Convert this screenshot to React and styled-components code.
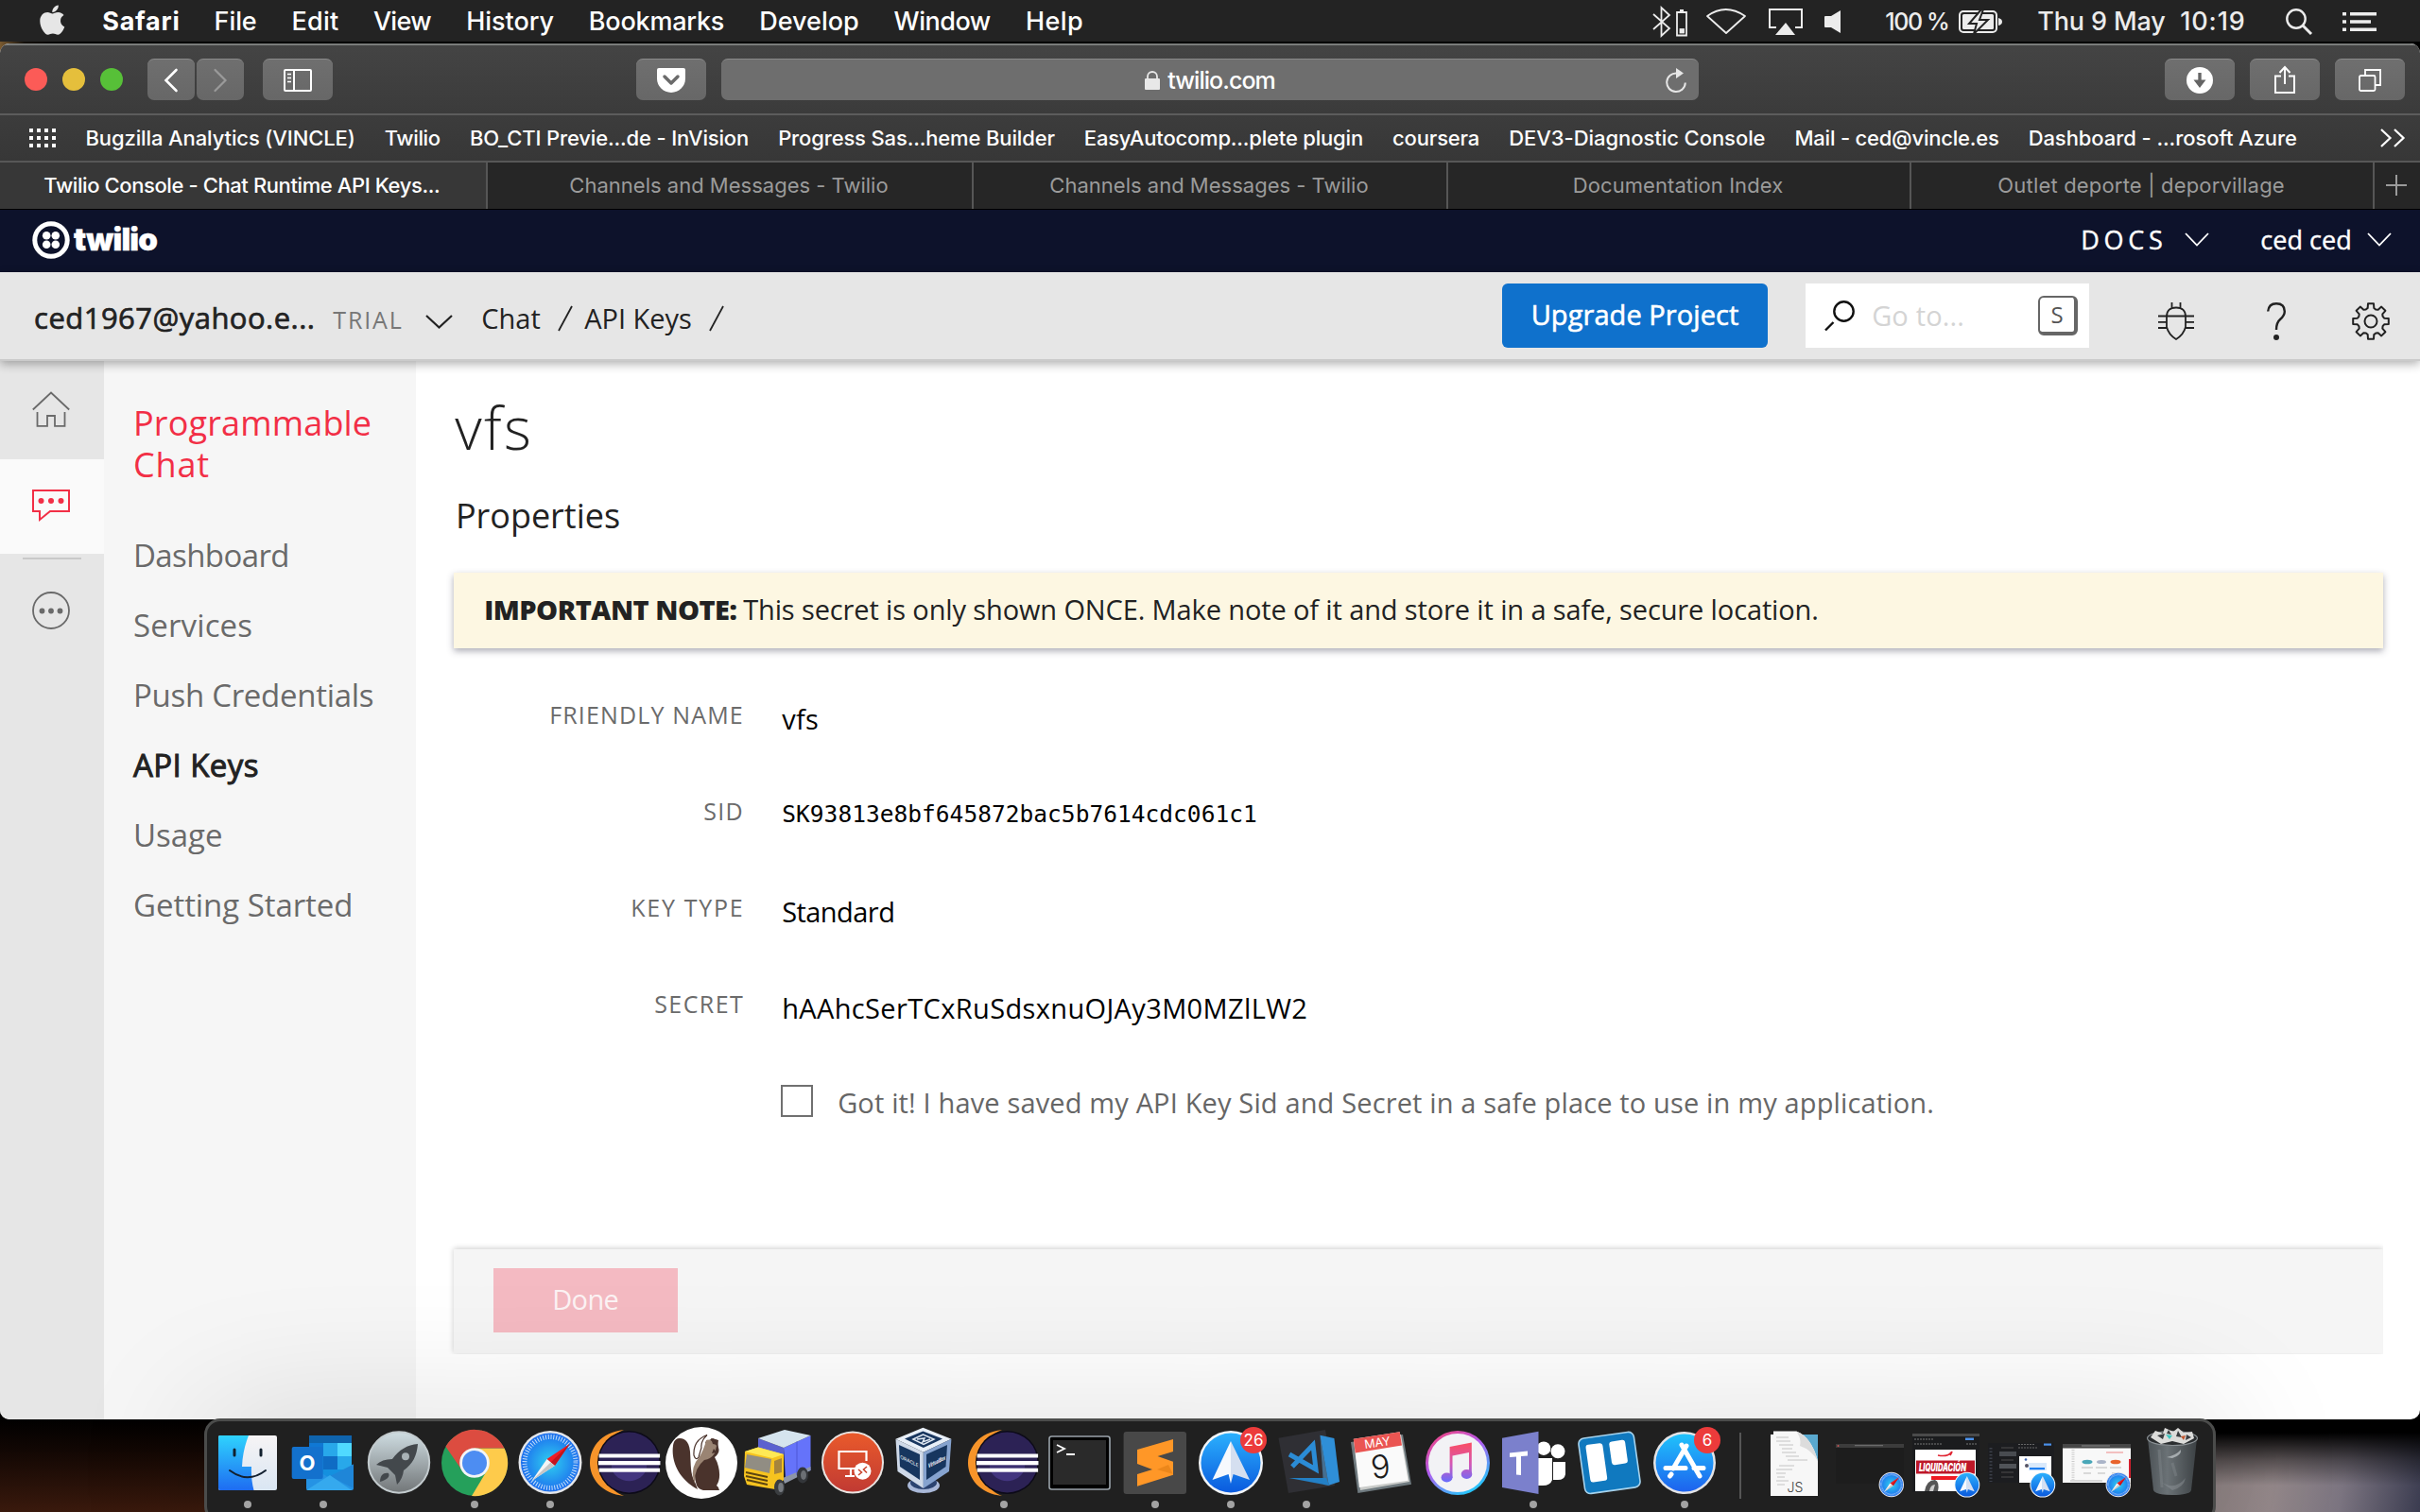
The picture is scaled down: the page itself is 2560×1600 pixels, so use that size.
import React, { useLayoutEffect, useRef } from 'react';
import styled, { createGlobalStyle } from 'styled-components';
import { FaApple } from 'react-icons/fa';

const GlobalStyle = createGlobalStyle`
  * { box-sizing: border-box; }
  html, body { margin: 0; padding: 0; background: #000; }
  body { width: 2560px; height: 1600px; overflow: hidden; }
  svg { display: block; overflow: visible; flex: none; }
  h1, h2, p, ul, dl, dd, dt { margin: 0; padding: 0; font-weight: inherit; }
`;

const system = `Inter, Roboto, sans-serif`;
const whitney = `"Open Sans", "Noto Sans", sans-serif`;

/* ---------- text whose tracking is worked out from its optical width ---------- */
const Tracked = styled.span`
  display: inline-block;
  white-space: pre;
  flex: none;
`;

function Fit({ w, children, ...rest }) {
  const ref = useRef(null);
  useLayoutEffect(() => {
    const el = ref.current;
    el.style.letterSpacing = '0px';
    el.style.margin = '0';
    const size = parseFloat(getComputedStyle(el).fontSize);
    const pad = size * 0.03;
    const natural = el.getBoundingClientRect().width;
    const count = Math.max(1, el.textContent.length - 1);
    const spacing = (w + pad * 2 - natural) / count;
    el.style.letterSpacing = `${spacing}px`;
    el.style.marginLeft = `${-pad}px`;
    el.style.marginRight = `${-pad - spacing}px`;
  }, [w, children]);
  return <Tracked ref={ref} {...rest}>{children}</Tracked>;
}

/* ---------- desktop ---------- */
const Desktop = styled.div`
  width: 2560px;
  height: 1600px;
  display: flex;
  flex-direction: column;
  overflow: hidden;
  background:
    linear-gradient(to bottom, #000 0, rgba(20, 8, 4, 0.9) 35%, rgba(64, 28, 14, 0.9) 100%) 0 1500px / 230px 100px no-repeat,
    linear-gradient(to bottom, #000 0, #000 16%, rgba(0, 0, 0, 0.4) 46%, rgba(0, 0, 0, 0) 72%) 2330px 1500px / 230px 100px no-repeat,
    linear-gradient(100deg, #857a7a 0, #94888a 35%, #7b7480 65%, #3b3c50 100%) 2330px 1500px / 230px 100px no-repeat,
    linear-gradient(to right, #7a5a30 0, #14100c 1%, #000 3%) 0 44px / 2560px 20px no-repeat,
    #000;
`;

/* ---------- menu bar ---------- */
const MenuBar = styled.header`
  height: 44px;
  flex: none;
  display: flex;
  align-items: center;
  background: #232323;
  color: #fff;
  font: 450 27px/44px ${system};
  padding: 1px 46px 0 42px;
`;
const AppleLogo = styled(FaApple)`
  width: 26px;
  height: 32px;
  margin-bottom: 4px;
  color: #e6e6e6;
`;
const Menus = styled.nav`
  display: flex;
  gap: 38.4px;
  margin-left: 41px;
`;
const AppName = styled.span`
  font-weight: 700;
  display: flex;
`;
const Status = styled.div`
  display: flex;
  align-items: center;
  margin-left: auto;
  color: #ececec;
`;
const StatusItem = styled.div`
  display: flex;
  margin-left: ${(p) => p.$gap}px;
  font-size: ${(p) => p.$size || 27}px;
`;

/* ---------- browser window ---------- */
const Window = styled.main`
  height: 1456px;
  margin-top: 2px;
  flex: none;
  display: flex;
  flex-direction: column;
  overflow: hidden;
  border-radius: 10px;
  background: #fff;
`;
const Toolbar = styled.div`
  height: 76px;
  flex: none;
  display: flex;
  align-items: center;
  padding: 0 16px 0 26px;
  background: linear-gradient(#444, #3b3b3b);
  border-top: 2px solid #7a7c7b;
  border-bottom: 2px solid #5c5c5c;
`;
const Lights = styled.div`
  display: flex;
  gap: 16px;
`;
const Light = styled.span`
  width: 24px;
  height: 24px;
  border-radius: 50%;
  background: ${(p) => p.$color};
`;
const ToolButton = styled.div`
  width: ${(p) => p.$w || 74}px;
  height: 44px;
  margin-left: ${(p) => p.$gap || 0}px;
  flex: none;
  display: flex;
  align-items: center;
  justify-content: center;
  border-radius: 7px;
  background: linear-gradient(#6f6f6f, #676767);
  border-top: 1px solid #8a8a8a;
`;
const AddressBar = styled.div`
  width: 1034px;
  height: 44px;
  margin-left: 16px;
  flex: none;
  display: grid;
  grid-template-columns: 1fr auto 1fr;
  align-items: center;
  border-radius: 7px;
  background: #6e6e6e;
  border-top: 1px solid #8a8a8a;
  color: #fff;
  font: 450 25px/42px ${system};
`;
const Domain = styled.div`
  grid-column: 2;
  display: flex;
  align-items: center;
  gap: 9px;
`;
const Reload = styled.div`
  justify-self: end;
  margin-right: 13px;
`;
const Bookmarks = styled.div`
  height: 50px;
  flex: none;
  display: flex;
  align-items: center;
  gap: 32.2px;
  padding: 0 16px 0 31px;
  background: linear-gradient(#3c3c3c, #373737);
  border-bottom: 2px solid #575757;
  color: #fff;
  font: 450 22px/48px ${system};
`;
const More = styled.div`
  margin-left: auto;
`;
const Tabs = styled.div`
  height: 50px;
  flex: none;
  display: grid;
  grid-template-columns: 514px 514px 502px 490px 490px 50px;
  border-bottom: 1px solid #000;
`;
const Tab = styled.div`
  display: flex;
  justify-content: center;
  align-items: center;
  padding: 0 2px 1px 0;
  background: ${(p) => (p.$active ? '#373737' : '#262626')};
  color: ${(p) => (p.$active ? '#fff' : '#9b9b9b')};
  border-left: ${(p) => (p.$active ? 0 : 2)}px solid #565656;
  font: ${(p) => (p.$active ? 500 : 400)} 22px/48px ${system};
`;

/* ---------- console ---------- */
const Brand = styled.div`
  height: 66px;
  flex: none;
  display: flex;
  align-items: center;
  padding: 0 30px 3px 34px;
  background: #0d122b;
  color: #fff;
  font: 400 27px/60px ${whitney};
  -webkit-text-stroke: 0.4px currentColor;
`;
const Wordmark = styled.span`
  display: flex;
  margin-left: 5px;
  padding-bottom: 1px;
  font: 900 33px/56px Inter, sans-serif;
`;
const BrandMenu = styled.div`
  display: flex;
  align-items: center;
  gap: ${(p) => p.$gap}px;
  margin-left: ${(p) => p.$left};
`;
const ProjectBar = styled.div`
  height: 94px;
  flex: none;
  display: flex;
  align-items: center;
  padding: 0 32px 0 37px;
  background: #e6e6e6;
  border-bottom: 2px solid #cbcbcb;
  box-shadow: 0 3px 10px rgba(0, 0, 0, 0.32);
  z-index: 1;
  color: #222;
  font: 400 29px/60px ${whitney};
`;
const Crumbs = styled.div`
  display: flex;
  align-items: baseline;
  padding-top: 5px;
`;
const Account = styled.span`
  display: flex;
  font-size: 31px;
  -webkit-text-stroke: 0.7px currentColor;
`;
const Trial = styled.span`
  display: flex;
  margin: 0 26px 0 21px;
  font-size: 25px;
  color: #777;
`;
const Crumb = styled.span`
  display: flex;
  margin-left: ${(p) => p.$gap}px;
`;
const Upgrade = styled.div`
  width: 281px;
  height: 68px;
  margin-left: auto;
  padding-bottom: 3px;
  display: flex;
  align-items: center;
  justify-content: center;
  border-radius: 6px;
  background: #0f71cc;
  color: #fff;
  font-size: 29px;
  -webkit-text-stroke: 0.6px currentColor;
`;
const Search = styled.div`
  width: 300px;
  height: 68px;
  margin: 0 73px 0 40px;
  padding: 0 12px 0 20px;
  display: flex;
  align-items: center;
  gap: 19px;
  background: #fff;
  color: #d4d4d4;
`;
const KeyCap = styled.div`
  width: 42px;
  height: 42px;
  margin-left: auto;
  display: flex;
  align-items: center;
  justify-content: center;
  border: 2px solid #666;
  border-width: 2px 4px 4px 2px;
  border-radius: 6px;
  color: #555;
  font: 400 24px/36px ${whitney};
`;
const Tools = styled.div`
  display: flex;
  align-items: center;
  padding-top: 12px;
`;
const Body = styled.div`
  flex: 1;
  display: grid;
  grid-template-columns: 110px 330px 1fr;
`;
const Rail = styled.div`
  background: #e6e6e6;
  display: flex;
  flex-direction: column;
  align-items: center;
`;
const RailItem = styled.div`
  width: 110px;
  height: ${(p) => p.$h}px;
  padding: 0 2px 3px 0;
  display: flex;
  align-items: center;
  justify-content: center;
  background: ${(p) => (p.$active ? '#fafafa' : 'transparent')};
`;
const RailRule = styled.div`
  width: 62px;
  height: 2px;
  margin: 4px 0 1px;
  background: #c9c9c9;
`;
const Side = styled.nav`
  padding: 44px 0 0 32px;
  background: #f6f6f6;
`;
const SideTitle = styled.div`
  height: 88px;
  margin-bottom: 37px;
  display: flex;
  flex-direction: column;
  align-items: flex-start;
  color: #f22f46;
  font: 400 36px/44px ${whitney};
`;
const SideItem = styled.div`
  height: 74px;
  display: flex;
  align-items: center;
  color: ${(p) => (p.$active ? '#222' : '#6a6a6a')};
  font: 400 33px/74px ${whitney};
  -webkit-text-stroke: ${(p) => (p.$active ? 1 : 0)}px currentColor;
`;
const Content = styled.section`
  padding: 41px 39px 0 40px;
  display: flex;
  flex-direction: column;
  color: #222;
  font-family: ${whitney};
`;
const Title = styled.h1`
  height: 60px;
  margin-left: 3px;
  display: flex;
  font: 300 62px/58px ${whitney};
`;
const Subtitle = styled.h2`
  height: 40px;
  margin: 43px 0 40px 3px;
  display: flex;
  font: 400 36px/40px ${whitney};
`;
const Note = styled.div`
  height: 80px;
  flex: none;
  padding: 0 33px 3px;
  display: flex;
  align-items: center;
  gap: 8px;
  background: #fdf7e2;
  box-shadow: 0 3px 7px rgba(60, 60, 80, 0.42);
  font-size: 29px;
`;
const Strong = styled.strong`
  display: flex;
  font-weight: 800;
`;
const Fields = styled.dl`
  margin-top: 50px;
`;
const Field = styled.div`
  height: 102px;
  display: grid;
  grid-template-columns: 305px 1fr;
  column-gap: 43px;
`;
const Label = styled.dt`
  display: flex;
  justify-content: flex-end;
  padding-top: 2px;
  color: #6b6b6b;
  font: 400 25px/36px ${whitney};
`;
const Value = styled.dd`
  display: flex;
  padding-top: ${(p) => (p.$mono ? 6 : 7)}px;
  color: #000;
  font: ${(p) => (p.$mono ? `400 24.500px/36px "DejaVu Sans Mono", monospace` : `400 29px/36px ${whitney}`)};
`;
const Confirm = styled.div`
  height: 178px;
  padding: 4px 0 0 346px;
  display: flex;
  align-items: flex-start;
  gap: 27px;
  color: #666;
  font: 400 29px/38px ${whitney};
`;
const Box = styled.span`
  width: 34px;
  height: 34px;
  border: 2px solid #707070;
  background: #fff;
`;
const Actions = styled.div`
  height: 110px;
  padding: 20px 42px;
  background: #f5f5f5;
  box-shadow: 0 -1px 6px rgba(0, 0, 0, 0.2);
  clip-path: inset(-10px 0 -1px -8px);
`;
const Done = styled.div`
  width: 195px;
  height: 68px;
  display: flex;
  align-items: center;
  justify-content: center;
  background: #f4bac2;
  color: #fcf3f4;
  font: 400 29px/66px ${whitney};
  padding-bottom: 2px;
`;

/* ---------- dock ---------- */
const DockBar = styled.footer`
  width: 2128px;
  height: 110px;
  margin: -1px auto 0;
  padding-left: 3px;
  flex: none;
  display: flex;
  position: relative;
  border: 3px solid #4b4c4b;
  border-radius: 17px;
  background: #202020;
  box-shadow: 0 0 150px rgba(0, 0, 0, 0.15);
`;
const Slot = styled.div`
  width: 80px;
  display: flex;
  flex-direction: column;
  align-items: center;
`;
const Running = styled.span`
  width: 8px;
  height: 8px;
  border-radius: 50%;
  background: #a3a3a3;
`;
const DockRule = styled.span`
  width: 2px;
  height: 70px;
  margin: 12px 16px 0 18px;
  background: #555;
`;

const Chevron = ({ w = 29, h = 15, c = '#222', s = 2.2 }) => (
  <svg width={w} height={h} viewBox={`0 0 ${w} ${h}`} fill="none" stroke={c} strokeWidth={s}>
    <path d={`M1 1L${w / 2} ${h - 1.5}L${w - 1} 1`} />
  </svg>
);

const T = ({ x, y, s, f = '#fff', wt = 400, children, ...r }) => (
  <text x={x} y={y} fontSize={s} fill={f} fontWeight={wt} textAnchor="middle" fontFamily="Inter, sans-serif" {...r}>{children}</text>
);

const Badge = ({ n }) => (
  <g><circle cx="64" cy="20" r="14" fill="#ec3b3b" /><T x={64} y={26} s={17}>{n}</T></g>
);

const Compass = ({ id }) => (
  <g>
    <defs><radialGradient id={id}><stop offset="0" stopColor="#2fd0f0" /><stop offset="1" stopColor="#1d6fee" /></radialGradient></defs>
    <circle cx="40" cy="43.5" r="33.5" fill="#e4e6ea" />
    <circle cx="40" cy="43.5" r="31" fill={`url(#${id})`} />
    <circle cx="40" cy="43.5" r="27" fill="none" stroke="#fff" strokeOpacity=".75" strokeWidth="5" strokeDasharray="1 1.83" />
    <path d="M60.6 24L36.5 40L44.8 47Z" fill="#f01c24" />
    <path d="M60.6 24L40.5 43.5L44.8 47Z" fill="#c4141c" />
    <path d="M20.5 63L36.5 40L44.8 47Z" fill="#f4f4f4" />
    <path d="M20.5 63L40.5 43.5L44.8 47Z" fill="#c5c5c5" />
  </g>
);

const Plane = ({ id }) => (
  <g>
    <defs><linearGradient id={id} x2="0" y2="1"><stop offset="0" stopColor="#2bb0fd" /><stop offset="1" stopColor="#0a5ade" /></linearGradient></defs>
    <circle cx="40" cy="44" r="34" fill="#f2f5f8" />
    <circle cx="40" cy="44" r="31.5" fill={`url(#${id})`} />
    <path d="M40 21L20.5 62L37.6 56L40 66Z" fill="#f6f9fd" />
    <path d="M40 21L60 62L42.6 56L40 66Z" fill="#d5dff0" />
  </g>
);

const Eclipse = () => (
  <g>
    <path d="M38 9C-10 14 -10 74 38 79C8 68 8 20 38 9Z" fill="#f7942a" />
    <circle cx="43.5" cy="43.5" r="33.5" fill="#0c0a18" />
    <circle cx="43.5" cy="43.5" r="32" fill="#2c2255" />
    <path d="M25 50A19 17 0 0 0 62 50Z" fill="#43357f" />
    <path d="M25 45H62V50H25Z" fill="#3b2f70" />
    <g fill="#fff"><rect x="11.6" y="34.5" width="64.5" height="4" /><rect x="11" y="42" width="65.5" height="4.3" /><rect x="11.6" y="49.7" width="64.5" height="4" /></g>
  </g>
);

const icons = {
  finder: (
    <g>
      <defs>
        <linearGradient id="fa" x2="0" y2="1"><stop offset="0" stopColor="#2fd3fd" /><stop offset="1" stopColor="#1e6cf2" /></linearGradient>
        <linearGradient id="fb" x2="0" y2="1"><stop offset="0" stopColor="#f6f4f5" /><stop offset="1" stopColor="#d9e6f3" /></linearGradient>
      </defs>
      <rect x="9" y="15" width="62" height="58" rx="2" fill="url(#fb)" />
      <path d="M11 15H41C37 25 34.5 36 34 48H44C43.6 57 44.5 65 46.5 73H11Q9 73 9 71V17Q9 15 11 15Z" fill="url(#fa)" />
      <path d="M26 30V36M54 30V36" stroke="#12202f" strokeWidth="3" strokeLinecap="round" />
      <path d="M21 52Q40 66.5 59 52" fill="none" stroke="#12202f" strokeWidth="2" strokeLinecap="round" />
    </g>
  ),
  outlook: (
    <g>
      <rect x="25" y="15" width="45" height="50" rx="1.5" fill="#1490df" />
      <rect x="25" y="15" width="45" height="8" fill="#0f64ad" />
      <rect x="40" y="23" width="15" height="14" fill="#28a8ea" /><rect x="55" y="23" width="15" height="14" fill="#50d9ff" />
      <rect x="25" y="23" width="15" height="14" fill="#0f78d4" /><rect x="40" y="37" width="15" height="14" fill="#0f6cc4" />
      <rect x="55" y="37" width="15" height="14" fill="#28a8ea" />
      <path d="M22 46L47 60L72 45.5V71Q72 73 70 73H24Q22 73 22 71Z" fill="#2593e4" />
      <path d="M47 58L72 45.5V71Z" fill="#1f86d8" /><path d="M22 73L47 57L70 73Z" fill="#35a9ee" />
      <rect x="6.7" y="27" width="33" height="34" rx="2" fill="#1371cd" />
      <T x={23} y={52} s={22} wt={700}>O</T>
    </g>
  ),
  launchpad: (
    <g>
      <defs><linearGradient id="lp" x2="0" y2="1"><stop offset="0" stopColor="#cfdde2" /><stop offset="1" stopColor="#727678" /></linearGradient></defs>
      <circle cx="40" cy="43.5" r="32.2" fill="url(#lp)" stroke="#c3cbce" strokeWidth="2" />
      <path d="M60 24C49 25 40 30 33 40Q22 40 16 46L28 49L36 57L38 67Q44 61 45 52C55 45 59 36 60 24Z" fill="#43484c" />
      <circle cx="47" cy="37.3" r="4" fill="#a9b2b6" />
      <path d="M20 64C20 57 24 54 29 55C31 59 27 62 20 64Z" fill="#43484c" />
    </g>
  ),
  chrome: (
    <g>
      <circle cx="40" cy="44" r="35" fill="#25a05b" />
      <path d="M71.5 28.5A35 35 0 0 1 37 79L53.4 51.7L40 28.5Z" fill="#fecb4b" />
      <path d="M9.5 26.8A35 35 0 0 1 71.5 28.5H40L26.6 51.7Z" fill="#dc4c40" />
      <circle cx="40" cy="44" r="15.8" fill="#f3f5f6" /><circle cx="40" cy="44" r="13" fill="#4d8df2" />
    </g>
  ),
  safari: <Compass id="c1" />,
  eclipse: <Eclipse />,
  dbeaver: (
    <g>
      <circle cx="40" cy="44" r="38" fill="#fff" />
      <path d="M10 26C8 40 14 60 36 72L33 64C28 56 29 46 28 32C27 22 23 18 17 18C12 18 10.5 22 10 26Z" fill="#4a332c" />
      <path d="M48 32Q46 38 37 44Q30 54 35 68Q37 72 42 73H59Q58 69 56 68Q61 60 58 48Q57 43 54 38Q60 33 58 28L57 20L52 18L44 22Z" fill="#4a332c" />
      <path d="M44 24Q40 36 34 43Q28 54 33 66Q32 50 43 41Q50 40 54 34L56 26Q50 18 45 20Z" fill="#9a8473" />
      <path d="M32 36Q31 20 46 14.500Q39 21 40 28L37 38Q34 42 32 36Z" fill="#fff" stroke="#4a332c" strokeWidth="1.2" />
      <path d="M50 18L58 20L57 25L52 24ZM53 29L56 33L51 34Z" fill="#4a332c" />
    </g>
  ),
  truck: (
    <g>
      <path d="M20 18L47 28V62L20 50Z" fill="#5b62cf" /><path d="M47 28L75.5 15V52L49 61Z" fill="#6573fa" />
      <path d="M20 18L48 9L75.5 15L47 28Z" fill="#d5e4ee" /><path d="M46 60L75.5 48V52L48 66Z" fill="#8d96a6" />
      <path d="M61 21.500V57" stroke="#4e59d6" />
      <ellipse cx="67" cy="57" rx="6" ry="8.5" fill="#33363a" /><ellipse cx="68" cy="57" rx="3" ry="5" fill="#6b6f74" />
      <path d="M6 32L20 27.5L47 35V62L38 72L8 67L5 58Z" fill="#f6c31f" /><path d="M6 32L20 27.5L47 35L35 39Z" fill="#ffe955" />
      <path d="M8 35L34 40L32 55L6 49Z" fill="#918d83" /><path d="M37 42L45 39V54L37 56Z" fill="#a5843c" />
      <path d="M7 54L30 59M7 58L30 63M8 62L30 67" stroke="#5b4410" strokeWidth="1.8" />
      <ellipse cx="42.5" cy="70" rx="5.5" ry="8.5" fill="#3a3d40" /><ellipse cx="44" cy="70" rx="2.8" ry="5" fill="#777b80" />
    </g>
  ),
  remote: (
    <g>
      <defs><linearGradient id="rd" x2="0" y2="1"><stop offset="0" stopColor="#e95a2b" /><stop offset="1" stopColor="#c13a33" /></linearGradient></defs>
      <circle cx="40" cy="43.5" r="33" fill="#e9e4e1" /><circle cx="40" cy="43.5" r="31" fill="url(#rd)" />
      <path d="M45 50H25.5V32H54.5V42M38 50V57M32 58H42" fill="none" stroke="#fff" strokeWidth="2.2" />
      <circle cx="50.5" cy="52.7" r="9" fill="#fff" />
      <path d="M46 51L49.5 54L46 57M55 48L51.5 51L55 54.5" fill="none" stroke="#c9452f" strokeWidth="1.6" />
    </g>
  ),
  vbox: (
    <g>
      <ellipse cx="35" cy="68" rx="17" ry="8" fill="#a9b8d8" /><ellipse cx="35" cy="65" rx="14" ry="7" fill="#2b4370" />
      <path d="M5.5 18.7L34.4 6.7L64.4 18.7L34.8 32.7Z" fill="#e8eff8" /><path d="M5.5 18.7L34.8 32.7V71L7.5 53Z" fill="#cfd9e8" />
      <path d="M64.4 18.7L34.8 32.7V71L62 53Z" fill="#86a3cf" />
      <path d="M15 18.6L34.4 10.5L55 18.6L34.8 28Z" fill="#18365f" /><path d="M9 25L31 35V62L10 48Z" fill="#17365f" /><path d="M60 25L38 35V62L58.5 48Z" fill="#17365f" />
      <path d="M24 19L34.5 14L46 19L35 24.5ZM28 19L36 18L34 22L42 19" fill="none" stroke="#dfe8f3" strokeWidth="1.5" />
      <T x={0} y={0} s={5} transform="translate(20 44) skewY(26)">ORACLE</T>
      <T x={0} y={0} s={6.5} wt={700} transform="translate(49 45) skewY(-26)" textLength="18" lengthAdjust="spacingAndGlyphs">VirtualBox</T>
    </g>
  ),
  terminal: (
    <g>
      <rect x="8" y="16" width="64" height="56" rx="2.5" fill="#010101" stroke="#9aa3aa" strokeWidth="1.6" />
      <rect x="12" y="20" width="56" height="47" fill="#2a2a2a" />
      <path d="M16 25L24 29L16 33M26 35H35" fill="none" stroke="#fff" strokeWidth="1.8" />
    </g>
  ),
  sublime: (
    <g>
      <rect x="6.6" y="11" width="66.4" height="66" rx="3" fill="#484848" />
      <path d="M21 30L59 19V32L42.6 37L59 42.7V56.7L21 68.7V56L37 51L21 45Z" fill="#ff9727" /><path d="M42 51L59 56L54 46Z" fill="#e07d14" opacity=".6" />
    </g>
  ),
  spark: <g><Plane id="p1" /><Badge n="26" /></g>,
  vscode: (
    <g>
      <path d="M10.5 17.7L60 9L70 68L21 76Z" fill="#2f2f34" />
      <path d="M54.4 14.7L69.4 18L75 64L63.7 67.7Z" fill="#2f8fd8" /><path d="M54.4 14.7L58 67L63.7 67.7Z" fill="#5bb0ee" opacity=".5" />
      <path d="M21.6 60L61 60L64 68Z" fill="#2380c6" />
      <path d="M25 48L47 25L50 51L22 35" fill="none" stroke="#2b8cd6" strokeWidth="5" />
    </g>
  ),
  calendar: (
    <g>
      <path d="M7 22L62 14L71 66.7L14.4 76Z" fill="#6f7a7f" /><path d="M11 24L60 14L69 64L17 73Z" fill="#c9cbc9" />
      <path d="M9.8 18.7L58.7 11.3L67.6 62.7L15.9 70Z" fill="#fafafa" /><path d="M9.8 18.7L58.7 11.3L61 25.5L11.7 33.5Z" fill="#ea5552" />
      <T x={0} y={0} s={12.5} transform="translate(35.5 27) rotate(-8)">MAY</T>
      <T x={0} y={0} s={34} wt={300} f="#1c1c1c" transform="translate(40 60) rotate(-7)">9</T>
    </g>
  ),
  itunes: (
    <g>
      <defs>
        <linearGradient id="it" x2=".6" y2="1"><stop offset="0" stopColor="#fb3f6a" /><stop offset=".5" stopColor="#b35cf0" /><stop offset="1" stopColor="#28c4fb" /></linearGradient>
        <linearGradient id="in" gradientUnits="userSpaceOnUse" x1="40" y1="22" x2="40" y2="64"><stop offset="0" stopColor="#fb4d60" /><stop offset=".55" stopColor="#d457b5" /><stop offset="1" stopColor="#6a6cfb" /></linearGradient>
      </defs>
      <circle cx="40" cy="44" r="34" fill="url(#it)" /><circle cx="40" cy="44" r="31" fill="#f2f2f5" />
      <g fill="url(#in)"><path d="M31.6 27L54.8 22.500V56H52V33L34.5 36.500V60H31.6Z" /><ellipse cx="28.5" cy="59.500" rx="6" ry="5" /><ellipse cx="49.5" cy="56" rx="5.8" ry="5" /></g>
    </g>
  ),
  teams: (
    <g>
      <g fill="#fff"><circle cx="51" cy="28.7" r="7.3" /><circle cx="66" cy="31.7" r="7.5" /><path d="M45 39H60V62Q58 68 50 68H45Z" /><path d="M61 43H74V56Q73 62 66 62H61Z" /></g>
      <path d="M7 17.7L45.5 10.7V77L7 70Z" fill="#7b80cc" />
      <path d="M15 33.5L34 31.5V36.5L27 37V57L22 56.5V37.6L15 38Z" fill="#fff" />
    </g>
  ),
  trello: (
    <g transform="rotate(-8 40 44)">
      <rect x="11" y="14.5" width="59" height="59" rx="6" fill="#1079bf" stroke="#a6d2ec" strokeWidth="1.6" />
      <rect x="18" y="22" width="18" height="40" rx="3" fill="#fff" /><rect x="43" y="22" width="17" height="25" rx="3" fill="#fff" />
    </g>
  ),
  appstore: (
    <g>
      <defs><linearGradient id="as" x2="0" y2="1"><stop offset="0" stopColor="#20c3fb" /><stop offset="1" stopColor="#1d62ee" /></linearGradient></defs>
      <circle cx="40" cy="44" r="33" fill="#e4e4e6" /><circle cx="40" cy="44" r="30.5" fill="url(#as)" />
      <path d="M42 26L28 50M26 56L24.5 58M37 25L56 58M20 49.5H41M50 49.5H60" stroke="#fff" strokeWidth="5" strokeLinecap="round" fill="none" />
      <Badge n="6" />
    </g>
  ),
  doc: (
    <g>
      <path d="M15 14H65V60H15Z" fill="#5aa9cf" /><path d="M18 10.500H42Q58 16 65 42V79H15V14H18Z" fill="#f7f7f7" />
      <path d="M42 10.5Q48 18 46 26Q58 30 65 42Q58 16 42 10.5Z" fill="#dcdcdc" />
      <path d="M21 17H34M21 21H36M24 25H39M27 29H38M27 33H42M31 37H45M33 41H54M24 47H40M21 51H38M21 55H31M22 59H30M21 63H34M22 67H30" stroke="#c4c4c4" strokeWidth="1" />
      <T x={41} y={75} s={14} wt={300} f="#444">JS</T>
    </g>
  ),
  win1: (
    <g>
      <rect x="4" y="24" width="72" height="42" fill="#1d1d1d" /><rect x="4" y="24" width="72" height="4" fill="#3c3c3c" />
      <path d="M24 25.7H54" stroke="#777" /><circle cx="6.5" cy="26" r="1" fill="#c55" />
      <g transform="translate(47 49.8) scale(.395)"><Compass id="c2" /></g>
    </g>
  ),
  win2: (
    <g>
      <rect x="5" y="13" width="71" height="62" fill="#1b1c1e" /><rect x="5" y="13" width="71" height="3" fill="#4a4a4a" />
      <rect x="61" y="17.5" width="9" height="2.5" fill="#4b90e8" /><path d="M7 19H28M7 24H36M62 24H74" stroke="#777" strokeDasharray="2 1" />
      <rect x="8" y="30" width="64" height="44" fill="#fff" />
      <path d="M32 36Q42 38 46 33Q48 31 45 36" fill="none" stroke="#e02432" strokeWidth="1.6" />
      <rect x="9" y="41.500" width="62" height="14" fill="#bd1728" />
      <T x={37} y={53} s={12} wt={900} fontStyle="italic" textLength="50" lengthAdjust="spacingAndGlyphs">LIQUIDACIÓN</T>
      <rect x="25" y="58" width="30" height="4" fill="#ee1c25" /><path d="M18 74Q20 62 29 62Q34 64 32 74Z" fill="#555" /><path d="M23 74Q24 67 29 67L27 74Z" fill="#ccc" />
      <g transform="translate(47 49.8) scale(.395)"><Plane id="p2" /></g>
    </g>
  ),
  win3: (
    <g>
      <rect x="5" y="23" width="70" height="42" fill="#1c1d20" />
      <path d="M8 28V64" stroke="#3a3f48" strokeWidth="3" strokeDasharray="1.500 2" />
      <rect x="17" y="32" width="18" height="5" fill="#484b50" /><rect x="17" y="45" width="18" height="5" fill="#505358" />
      <path d="M19 28H32M19 41H32M19 54H32M19 59H32" stroke="#4c4c4c" strokeWidth="1" />
      <rect x="64" y="23.5" width="8" height="2.2" fill="#4b90e8" /><path d="M37 24.5H54M37 28H58" stroke="#666" strokeDasharray="2 1" />
      <rect x="38" y="37" width="34" height="28" fill="#fff" /><rect x="48" y="44" width="19" height="8" fill="#d9e9fb" /><rect x="49" y="49" width="16" height="2.2" fill="#1f7ff0" />
      <circle cx="45" cy="40.500" r="1.3" fill="#4267b2" /><circle cx="46" cy="47" r="2" fill="#556" />
      <g transform="translate(47 49.8) scale(.395)"><Plane id="p3" /></g>
    </g>
  ),
  win4: (
    <g>
      <rect x="4" y="24" width="72" height="41" fill="#f8f8f8" /><rect x="4" y="24" width="72" height="4.5" fill="#474747" />
      <path d="M24 26H54" stroke="#888" /><path d="M15 30V62" stroke="#ccc" strokeWidth="3" strokeDasharray="1 1.4" />
      <path d="M24 49H36M39 49H51M54 49H66M26 55H34M41 55H49M56 55H64M12 63H46" stroke="#b9b9b9" strokeWidth="1" />
      <path d="M50 33H68" stroke="#e88" strokeWidth="1" /><rect x="74" y="40" width="2" height="20" fill="#d3202e" />
      <ellipse cx="30" cy="43" rx="5.5" ry="2.3" fill="#4aa7b8" /><ellipse cx="45" cy="43" rx="5" ry="2" fill="#aab4c8" /><ellipse cx="60" cy="43" rx="5.5" ry="2.3" fill="#e8632c" />
      <g transform="translate(47 49.8) scale(.395)"><Compass id="c4" /></g>
    </g>
  ),
  trash: (
    <g>
      <defs><linearGradient id="tr"><stop offset="0" stopColor="#4d5357" /><stop offset=".4" stopColor="#6b7276" /><stop offset="1" stopColor="#3c4144" /></linearGradient></defs>
      <path d="M14 18L20 73Q22 78 40 78Q58 78 60 73L66 18Z" fill="url(#tr)" />
      <ellipse cx="40" cy="18" rx="26.5" ry="7.5" fill="#2b2e30" stroke="#8b9195" strokeWidth="1.2" />
      <path d="M17 17L22 10L30 13L32 7L41 11L46 7L52 12L61 11L63 18L52 24L40 21L28 24Z" fill="#dcdcda" />
      <path d="M24 15L32 13L30 19ZM46 10L50 17L44 16ZM55 14L60 17L54 20ZM36 9L39 14L34 13Z" fill="#3a3d40" />
      <path d="M33 14L40 15L37 19Z" fill="#3fc6c0" /><path d="M49 16L54 15L52 20Z" fill="#c2562d" />
      <path d="M34 38Q44 36 49 30Q50 36 40 39Z" fill="#c5cacd" opacity=".7" /><path d="M28 64Q42 74 54 60Q52 70 40 73Z" fill="#989ea2" opacity=".4" />
      <path d="M26 30L29 70M40 44L44 58" stroke="#9ba1a5" strokeWidth="3" opacity=".25" />
    </g>
  ),
};

const dockApps = [
  ['finder', 1], ['outlook', 1], ['launchpad'], ['chrome', 1], ['safari', 1], ['eclipse'], ['dbeaver'], ['truck'], ['remote'], ['vbox'],
  ['eclipse', 1], ['terminal'], ['sublime', 1], ['spark', 1], ['vscode', 1], ['calendar'], ['itunes'], ['teams', 1], ['trello'], ['appstore', 1],
];
const dockShelf = ['doc', 'win1', 'win2', 'win3', 'win4', 'trash'];

const DockIcon = ({ name, running }) => (
  <Slot>
    <svg width="80" height="84" viewBox="0 0 80 84">{icons[name]}</svg>
    {running ? <Running /> : null}
  </Slot>
);

const menus = [['File', 43.5], ['Edit', 48], ['View', 60], ['History', 91], ['Bookmarks', 142], ['Develop', 104], ['Window', 101], ['Help', 59]];
const bookmarks = [
  ['Bugzilla Analytics (VINCLE)', 284], ['Twilio', 58], ['BO_CTI Previe...de - InVision', 294], ['Progress Sas...heme Builder', 291.5],
  ['EasyAutocomp...plete plugin', 294], ['coursera', 91], ['DEV3-Diagnostic Console', 270], ['Mail - ced@vincle.es', 215], ['Dashboard - ...rosoft Azure', 283],
];
const tabs = [
  ['Twilio Console - Chat Runtime API Keys...', 418], ['Channels and Messages - Twilio', 336], ['Channels and Messages - Twilio', 336],
  ['Documentation Index', 221], ['Outlet deporte | deporvillage', 302],
];
const sections = [['Dashboard', 163.5], ['Services', 124], ['Push Credentials', 252.5], ['API Keys', 130.5], ['Usage', 92.5], ['Getting Started', 230.5]];

const gear = Array.from({ length: 8 }, (_, i) => {
  const p = (r, d) => {
    const a = ((i * 45 + d - 90) * Math.PI) / 180;
    return `${(20 + r * Math.cos(a)).toFixed(1)} ${(20 + r * Math.sin(a)).toFixed(1)}`;
  };
  return `${i ? 'L' : 'M'}${p(14.5, -13)}L${p(19, -9)}L${p(19, 9)}L${p(14.5, 13)}L${p(13.6, 22)}`;
}).join('') + 'Z';

export default function App() {
  return (
    <Desktop>
      <GlobalStyle />
      <MenuBar>
        <AppleLogo viewBox="0 24 376 460" preserveAspectRatio="none" />
        <Menus>
          <AppName><Fit w={80}>Safari</Fit></AppName>
          {menus.map(([m, w]) => <Fit key={m} w={w}>{m}</Fit>)}
        </Menus>
        <Status>
          <StatusItem $gap={0}>
            <svg width="37" height="32" viewBox="0 0 37 32" fill="none" stroke="#ececec" strokeWidth="1.8">
              <path d="M1 8L18 23L9.5 31V1L18 9L1 24" /><path d="M26 6H36V30.5H26ZM29 4H33" /><rect x="29.5" y="24" width="3.5" height="3.5" fill="#ececec" />
            </svg>
          </StatusItem>
          <StatusItem $gap={20}>
            <svg width="42" height="27" viewBox="0 0 42 27" fill="none" stroke="#ececec" strokeWidth="1.8"><path d="M1 8Q20.500 -6 41 8L21 26Z" strokeLinejoin="round" /></svg>
          </StatusItem>
          <StatusItem $gap={24}>
            <svg width="36" height="28" viewBox="0 0 36 28" fill="none" stroke="#ececec" strokeWidth="2"><path d="M8 20H1V1H35V20H28" /><path d="M18 15L28 28H7Z" fill="#ececec" stroke="none" /></svg>
          </StatusItem>
          <StatusItem $gap={23}>
            <svg width="18" height="24" viewBox="0 0 18 24" fill="#ececec"><path d="M0 7Q0 6 1 6H7L17 0V24L7 18H1Q0 18 0 17Z" /></svg>
          </StatusItem>
          <StatusItem $gap={47} $size={25}><Fit w={67}>100 %</Fit></StatusItem>
          <StatusItem $gap={10}>
            <svg width="46" height="24" viewBox="0 0 46 24">
              <rect x="1" y="1" width="39" height="22" rx="4" fill="none" stroke="#ececec" strokeWidth="2" /><rect x="4" y="4" width="33" height="16" rx="1.500" fill="#ececec" />
              <path d="M42 8Q46 9 46 12Q46 15 42 16Z" fill="#ececec" /><path d="M24 -1L11 14H19L16 25L31 10H22L26 -1Z" fill="#ececec" stroke="#232323" strokeWidth="2" />
            </svg>
          </StatusItem>
          <StatusItem $gap={38}><Fit w={134}>Thu 9 May</Fit></StatusItem>
          <StatusItem $gap={17}><Fit w={67}>10:19</Fit></StatusItem>
          <StatusItem $gap={44}>
            <svg width="28" height="28" viewBox="0 0 28 28" fill="none" stroke="#ececec" strokeWidth="2.400"><circle cx="11" cy="11" r="9.700" /><path d="M18 18L27 27" strokeWidth="3" /></svg>
          </StatusItem>
          <StatusItem $gap={32}>
            <svg width="36" height="20" viewBox="0 0 36 20" fill="#ececec"><path d="M0 0H4V3.500H0ZM8 0H36V3.500H8ZM0 8.200H4V11.700H0ZM8 8.200H30V11.700H8ZM0 16.500H4V20H0ZM8 16.500H36V20H8Z" /></svg>
          </StatusItem>
        </Status>
      </MenuBar>

      <Window>
        <Toolbar>
          <Lights><Light $color="#fc5b57" /><Light $color="#e5bf3c" /><Light $color="#57c038" /></Lights>
          <ToolButton $w={50} $gap={26}><svg width="14" height="24" viewBox="0 0 14 24" fill="none" stroke="#fff" strokeWidth="2.600" strokeLinecap="round"><path d="M12.500 1L1.500 12L12.500 23" /></svg></ToolButton>
          <ToolButton $w={50} $gap={2}><svg width="14" height="24" viewBox="0 0 14 24" fill="none" stroke="#9a9a9a" strokeWidth="2.200" strokeLinecap="round"><path d="M1.500 1L12.500 12L1.500 23" /></svg></ToolButton>
          <ToolButton $gap={20}>
            <svg width="30" height="24" viewBox="0 0 30 24" fill="none" stroke="#fff" strokeWidth="2"><rect x="1" y="1" width="28" height="22" rx="1" /><path d="M11 1V23" /><path d="M4 5.500H8M4 9.500H8M4 13.500H8" strokeWidth="1.600" /></svg>
          </ToolButton>
          <ToolButton $gap={321}>
            <svg width="30" height="26" viewBox="0 0 30 26"><path d="M2 0H28Q30 0 30 2V11A15 15 0 0 1 0 11V2Q0 0 2 0Z" fill="#fff" /><path d="M8 9L15 16L22 9" fill="none" stroke="#6b6b6b" strokeWidth="3.500" strokeLinecap="round" strokeLinejoin="round" /></svg>
          </ToolButton>
          <AddressBar>
            <Domain>
              <svg width="16" height="20" viewBox="0 0 16 20"><rect y="8" width="16" height="12" rx="1" fill="#e8e8e8" /><path d="M3 9V6A5 5 0 0 1 13 6V9" fill="none" stroke="#e8e8e8" strokeWidth="1.800" /></svg>
              <Fit w={113}>twilio.com</Fit>
            </Domain>
            <Reload>
              <svg width="22" height="26" viewBox="0 0 22 26" fill="none" stroke="#e6e6e6" strokeWidth="2"><path d="M12 5.500A9.800 9.800 0 1 0 20.800 15.500" /><path d="M11 0L19 5.500L11 11Z" fill="#e6e6e6" stroke="none" /></svg>
            </Reload>
          </AddressBar>
          <ToolButton $gap={493}>
            <svg width="28" height="28" viewBox="0 0 28 28"><circle cx="14" cy="14" r="14" fill="#fff" /><path d="M12.300 6H15.700V13.500H20.500L14 22L7.500 13.500H12.300Z" fill="#656565" /></svg>
          </ToolButton>
          <ToolButton $gap={16}>
            <svg width="22" height="30" viewBox="0 0 22 30" fill="none" stroke="#fff" strokeWidth="2"><path d="M7 10.500H1V28H21V10.500H15M11 19V2M5.500 7L11 1L16.500 7" /></svg>
          </ToolButton>
          <ToolButton $gap={16}>
            <svg width="24" height="24" viewBox="0 0 24 24" fill="none" stroke="#fff" strokeWidth="1.800"><rect x="1" y="7" width="16.500" height="16" rx="1.500" /><path d="M7 7V1H23V17H17.500" /></svg>
          </ToolButton>
        </Toolbar>
        <Bookmarks>
          <svg width="28" height="20" viewBox="0 0 28 20" fill="#fff">
            {[0, 8, 16].map((y) => [0, 8, 16, 24].map((x) => <rect key={`${x}-${y}`} x={x} y={y} width="4" height="4" />))}
          </svg>
          {bookmarks.map(([b, w]) => <Fit key={b} w={w}>{b}</Fit>)}
          <More><svg width="26" height="18" viewBox="0 0 26 18" fill="none" stroke="#fff" strokeWidth="2.200"><path d="M1 0L10.500 9L1 18M15 0L24.500 9L15 18" /></svg></More>
        </Bookmarks>
        <Tabs>
          {tabs.map(([t, w], i) => <Tab key={i} $active={i === 0}><Fit w={w}>{t}</Fit></Tab>)}
          <Tab><svg width="22" height="22" viewBox="0 0 22 22" stroke="#9b9b9b" strokeWidth="2"><path d="M11 0V22M0 11H22" /></svg></Tab>
        </Tabs>

        <Brand>
          <svg width="40" height="40" viewBox="0 0 40 40" fill="#fff">
            <circle cx="20" cy="20" r="17.200" fill="none" stroke="#fff" strokeWidth="5" />
            <circle cx="15.200" cy="15.200" r="4.300" /><circle cx="24.800" cy="15.200" r="4.300" /><circle cx="15.200" cy="24.800" r="4.300" /><circle cx="24.800" cy="24.800" r="4.300" />
          </svg>
          <Wordmark><Fit w={87}>twilio</Fit></Wordmark>
          <BrandMenu $gap={24} $left="auto"><Fit w={85}>DOCS</Fit><Chevron w={26} h={15} c="#fff" s={1.8} /></BrandMenu>
          <BrandMenu $gap={17} $left="55px"><Fit w={95}>ced ced</Fit><Chevron w={26} h={15} c="#fff" s={1.8} /></BrandMenu>
        </Brand>

        <ProjectBar>
          <Crumbs>
            <Account><Fit w={295}>ced1967@yahoo.e...</Fit></Account>
            <Trial><Fit w={71}>TRIAL</Fit></Trial>
            <Chevron />
            <Crumb $gap={31}><Fit w={61}>Chat</Fit></Crumb>
            <Crumb $gap={19}><svg width="16" height="26" viewBox="0 0 16 22" stroke="#222" strokeWidth="1.800"><path d="M1 26L15 0" /></svg></Crumb>
            <Crumb $gap={13}><Fit w={112}>API Keys</Fit></Crumb>
            <Crumb $gap={19}><svg width="16" height="26" viewBox="0 0 16 22" stroke="#222" strokeWidth="1.800"><path d="M1 26L15 0" /></svg></Crumb>
          </Crumbs>
          <Upgrade><Fit w={218}>Upgrade Project</Fit></Upgrade>
          <Search>
            <svg width="32" height="32" viewBox="0 0 32 32" fill="none" stroke="#111" strokeWidth="2.400"><circle cx="20.500" cy="11.500" r="10.200" /><path d="M9.500 23L1 31.500" /></svg>
            <Fit w={96}>Go to...</Fit>
            <KeyCap>S</KeyCap>
          </Search>
          <Tools>
            <StatusItem $gap={0}>
              <svg width="38" height="40" viewBox="0 0 38 40" fill="none" stroke="#222" strokeWidth="1.800">
                <path d="M14.500 0V6M23.500 0V6M9 15Q9 5.500 19 5.500Q29 5.500 29 15V26Q27 34 19 39Q11 34 9 26ZM0 14.500H38M0 20.800H9M29 20.800H38M0 27H9M29 27H38" />
              </svg>
            </StatusItem>
            <StatusItem $gap={77}>
              <svg width="20" height="40" viewBox="0 0 20 40" fill="none" stroke="#222" strokeWidth="2.400">
                <path d="M1.200 9.500Q2 1.200 10 1.200Q18.800 1.200 18.800 9.500Q18.800 14 14 18Q10 21.500 10 29" /><circle cx="10" cy="37" r="3" fill="#222" stroke="none" />
              </svg>
            </StatusItem>
            <StatusItem $gap={70}>
              <svg width="40" height="40" viewBox="0 0 40 40" fill="none" stroke="#222" strokeWidth="2" strokeLinejoin="round"><path d={gear} /><circle cx="20" cy="20" r="6.500" /></svg>
            </StatusItem>
          </Tools>
        </ProjectBar>

        <Body>
          <Rail>
            <RailItem $h={104}>
              <svg width="40" height="38" viewBox="0 0 40 38" fill="none" stroke="#6a6a6a" strokeWidth="1.800"><path d="M.8 19.500L20 1.500L39.200 19.500M5.500 22V36.800H16V26H24V36.800H34.500V22" /></svg>
            </RailItem>
            <RailItem $h={100} $active>
              <svg width="40" height="34" viewBox="0 0 40 34" fill="none" stroke="#f22f46" strokeWidth="2"><path d="M1 1H39V23H19L8 32V23H1Z" /><g fill="#f22f46" stroke="none"><circle cx="9.500" cy="12" r="3" /><circle cx="20" cy="12" r="3" /><circle cx="30.500" cy="12" r="3" /></g></svg>
            </RailItem>
            <RailRule />
            <RailItem $h={108}>
              <svg width="40" height="40" viewBox="0 0 40 40" fill="none" stroke="#6a6a6a" strokeWidth="1.800"><circle cx="20" cy="20" r="19" /><g fill="#6a6a6a" stroke="none"><circle cx="10.500" cy="20.500" r="2.900" /><circle cx="20" cy="20.500" r="2.900" /><circle cx="29.500" cy="20.500" r="2.900" /></g></svg>
            </RailItem>
          </Rail>
          <Side>
            <SideTitle><Fit w={250}>Programmable</Fit><Fit w={78}>Chat</Fit></SideTitle>
            {sections.map(([s, w]) => <SideItem key={s} $active={s === 'API Keys'}><Fit w={w}>{s}</Fit></SideItem>)}
          </Side>
          <Content>
            <Title><Fit w={77}>vfs</Fit></Title>
            <Subtitle><Fit w={172}>Properties</Fit></Subtitle>
            <Note>
              <Strong><Fit w={266}>IMPORTANT NOTE:</Fit></Strong>
              <Fit w={1136}>This secret is only shown ONCE. Make note of it and store it in a safe, secure location.</Fit>
            </Note>
            <Fields>
              <Field><Label><Fit w={203}>FRIENDLY NAME</Fit></Label><Value><Fit w={37}>vfs</Fit></Value></Field>
              <Field><Label><Fit w={40}>SID</Fit></Label><Value $mono><Fit w={501}>SK93813e8bf645872bac5b7614cdc061c1</Fit></Value></Field>
              <Field><Label><Fit w={117}>KEY TYPE</Fit></Label><Value><Fit w={118}>Standard</Fit></Value></Field>
              <Field><Label><Fit w={92}>SECRET</Fit></Label><Value><Fit w={554}>hAAhcSerTCxRuSdsxnuOJAy3M0MZlLW2</Fit></Value></Field>
            </Fields>
            <Confirm><Box /><Fit w={1158}>Got it! I have saved my API Key Sid and Secret in a safe place to use in my application.</Fit></Confirm>
            <Actions><Done><Fit w={69}>Done</Fit></Done></Actions>
          </Content>
        </Body>
      </Window>

      <DockBar>
        {dockApps.map(([name, running], i) => <DockIcon key={i} name={name} running={running} />)}
        <DockRule />
        {dockShelf.map((name) => <DockIcon key={name} name={name} />)}
      </DockBar>
    </Desktop>
  );
}
